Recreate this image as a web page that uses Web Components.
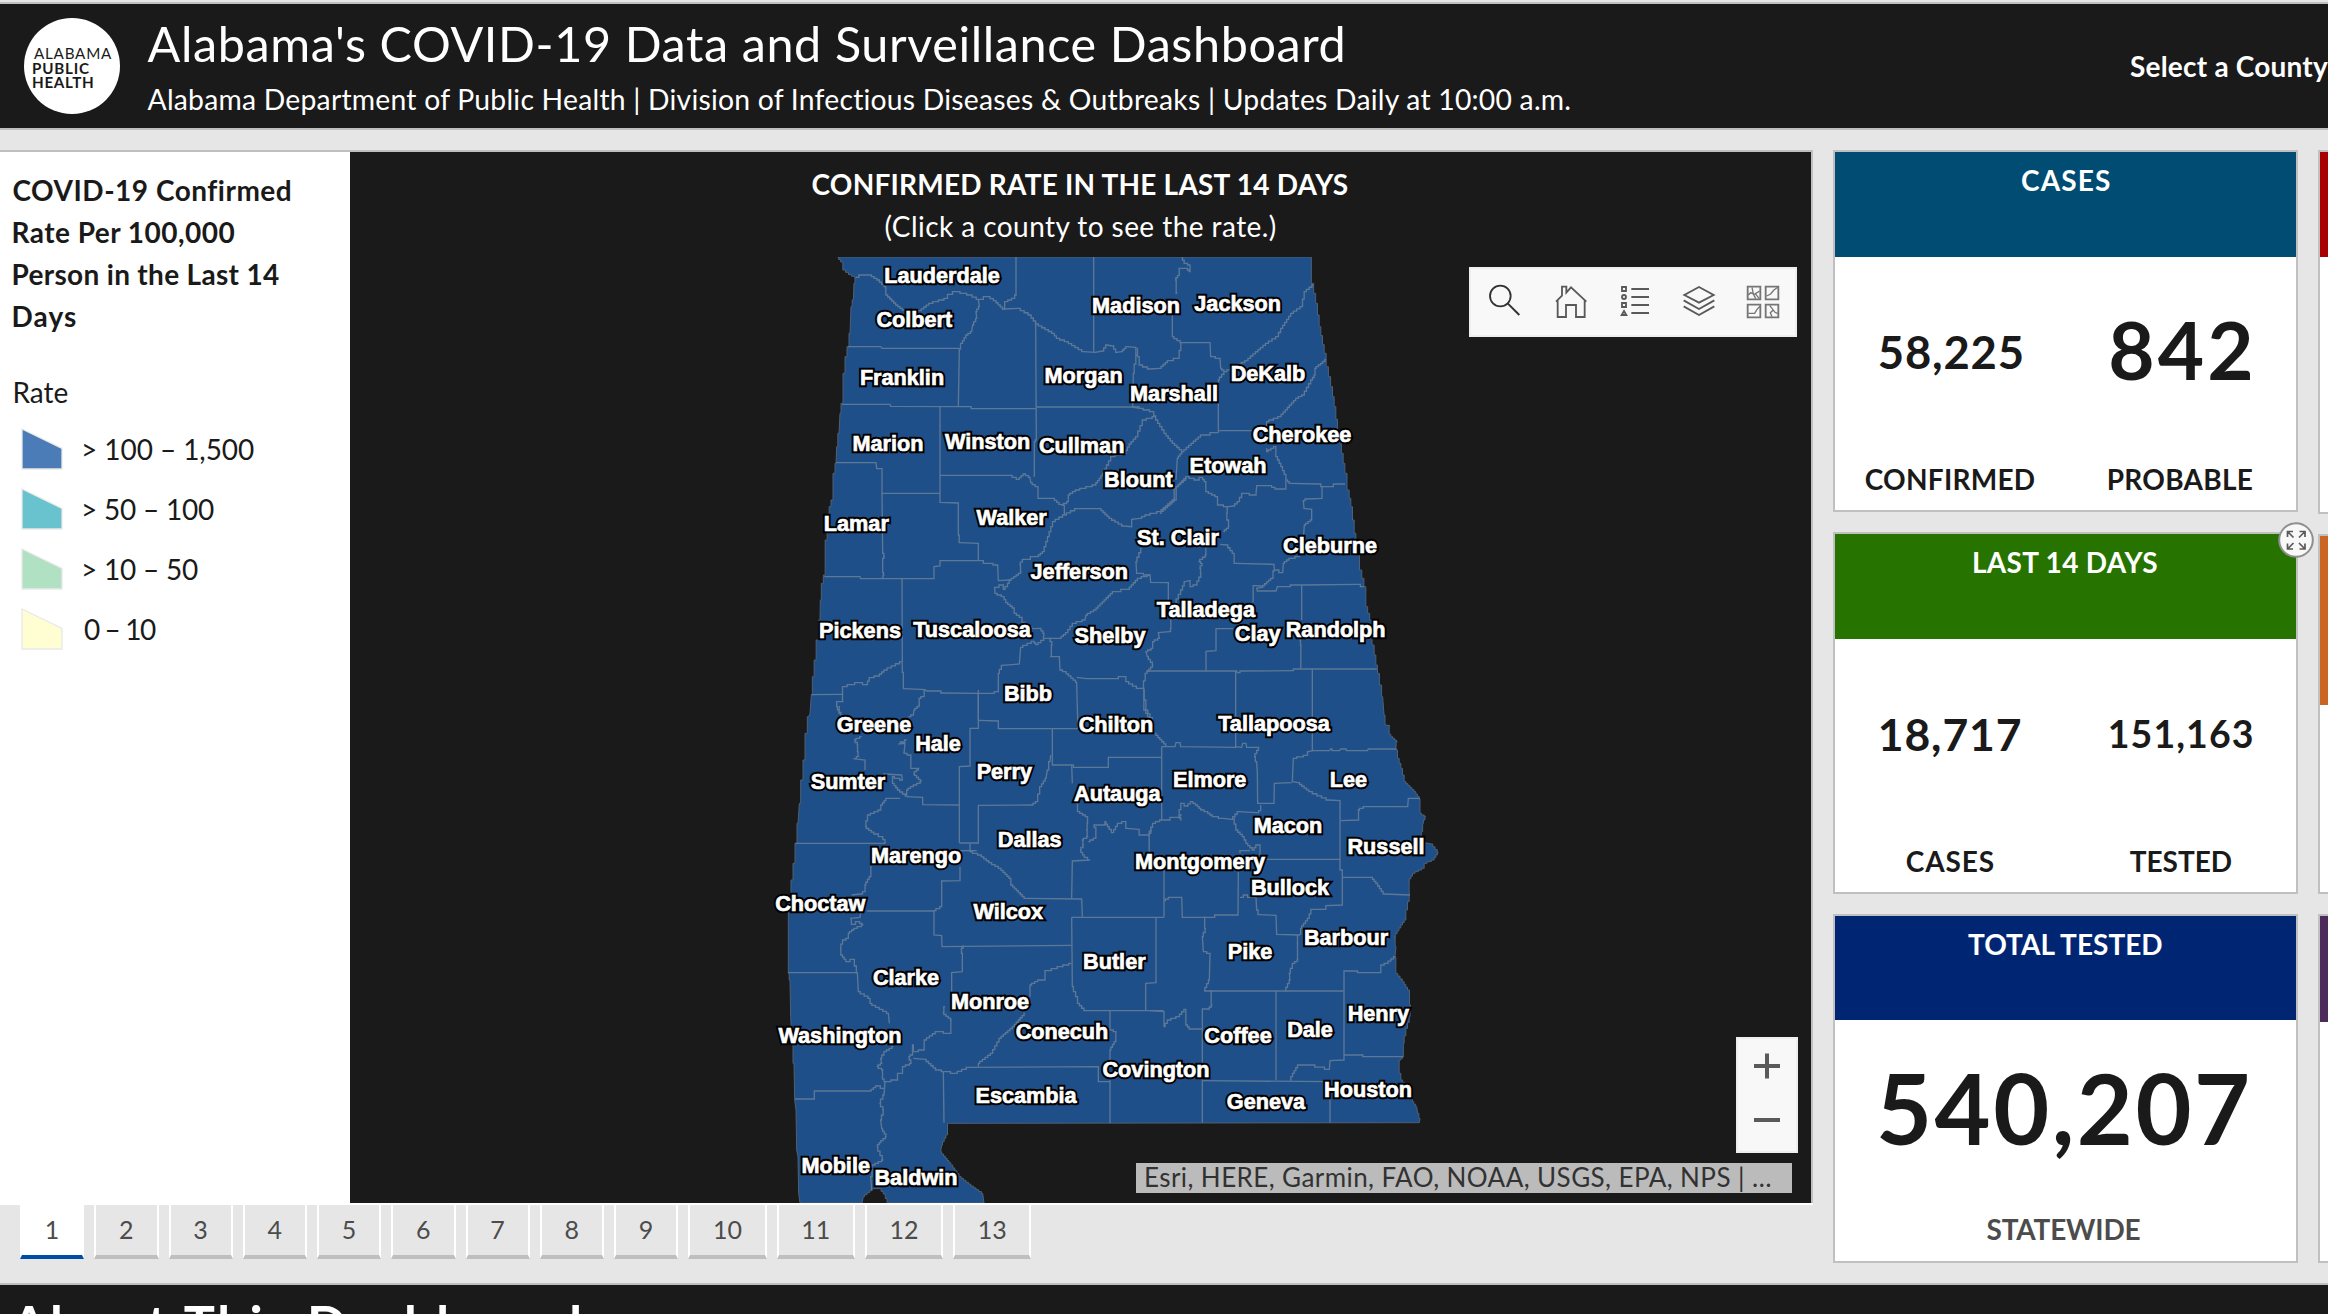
<!DOCTYPE html>
<html lang="en">
<head>
<meta charset="utf-8">
<title>Alabama's COVID-19 Data and Surveillance Dashboard</title>
<style>
html,body{margin:0;padding:0}
body{width:2328px;height:1314px;overflow:hidden;background:#e6e6e6;font-family:Lato,"Open Sans",sans-serif;font-size:28px;color:#1a1a1a}
</style>
</head>
<body>
<covid-dashboard></covid-dashboard>
<script>
const make = (name, html, setup) => customElements.define(name, class extends HTMLElement {
  connectedCallback() {
    if (this.shadowRoot) return;
    this.attachShadow({mode: 'open'}).innerHTML = typeof html === 'function' ? html(this) : html;
    if (setup) setup(this);
  }
});

/* One line of text whose drawn width is set by the w attribute. */
const ctx = document.createElement('canvas').getContext('2d');
make('fit-text', `<style>:host{display:block;white-space:nowrap}span{display:inline-block}</style><span><slot></slot></span>`, el => {
  const w = +el.getAttribute('w'), t = el.textContent, cs = getComputedStyle(el);
  ctx.font = `${cs.fontWeight} ${cs.fontSize} ${cs.fontFamily}`;
  const m = ctx.measureText(t);
  el.style.width = w + 'px';
  el.style.letterSpacing = ((w - m.actualBoundingBoxRight - m.actualBoundingBoxLeft) / (t.length - 1)) + 'px';
  el.shadowRoot.querySelector('span').style.marginLeft = m.actualBoundingBoxLeft + 'px';
});

make('health-logo', `<style>
:host{display:block;width:96px;height:96px;border-radius:50%;background:#fff;color:#1a1a1a;box-sizing:border-box;padding:28px 0 0 9px;font-size:15.2px;line-height:14.5px;font-weight:700}
.l{font-weight:400;margin-left:1px}</style>
<fit-text class="l" w="78">ALABAMA</fit-text><fit-text w="56">PUBLIC</fit-text><fit-text w="60">HEALTH</fit-text>`);

make('top-bar', `<style>
:host{display:flex;height:124px;margin-top:2px;border-top:2px solid #bfbfbf;border-bottom:2px solid #bfbfbf;background:#1a1a1a;color:#fff;overflow:hidden}
health-logo{margin:14px 28px 0 24px}
.t{width:1960px;margin-right:32px;padding-top:10px}
.a{font-size:48.5px;line-height:58px}.b{font-size:28.3px;line-height:34px;margin-top:10px}
.c{font-weight:700;line-height:34px;margin-top:45px;flex:none}</style>
<health-logo></health-logo>
<div class="t"><fit-text class="a" w="1195">Alabama's COVID-19 Data and Surveillance Dashboard</fit-text>
<fit-text class="b" w="1425">Alabama Department of Public Health | Division of Infectious Diseases &amp; Outbreaks | Updates Daily at 10:00 a.m.</fit-text></div>
<fit-text class="c" w="198">Select a County</fit-text>`);

make('legend-row', el => `<style>
:host{display:flex;align-items:center;height:60px;padding-left:21px;gap:21px}
svg{display:block;width:42px;height:42px}</style>
<svg viewBox="0 0 42 42"><path d="M1 1L41 20.500V41H1Z" fill="${el.getAttribute('color')}" stroke="#e9e9e9" stroke-width="1.300"/></svg><slot></slot>`);

make('map-legend', `<style>
:host{display:block;width:350px;flex:none;background:#fff;padding-top:17px;box-sizing:border-box}
.h{font-weight:700;line-height:42px;padding-left:13.500px}.r{line-height:42px;margin:34px 0 6px 14.500px}</style>
<div class="h"><fit-text w="277">COVID-19 Confirmed</fit-text><fit-text w="221.500">Rate Per 100,000</fit-text><fit-text w="265.500">Person in the Last 14</fit-text><fit-text w="62.500">Days</fit-text></div>
<fit-text class="r" w="53">Rate</fit-text>
<legend-row color="#4c7cb8"><fit-text w="170">&gt; 100 – 1,500</fit-text></legend-row>
<legend-row color="#68c3ce"><fit-text w="130">&gt; 50 – 100</fit-text></legend-row>
<legend-row color="#b1e1c3"><fit-text w="114">&gt; 10 – 50</fit-text></legend-row>
<legend-row color="#fefed2"><fit-text w="72">0 – 10</fit-text></legend-row>`);

/* County geometry, in thirds of a pixel; each tile has its own origin. */
const outline = `203,51 215,66 222,90 240,104 258,113 252,130 250,180 243,200 240,280 234,320 228,350 222,400 216,490 210,520 207,580 200,620 198,670 192,700 186,780 180,800 175,850 168,900 163,1005 157,1030 151,1080 150,1140 142,1200 135,1260 130,1310 124,1365 120,1420 116,1430 108,1480 102,1560 96,1620 88,1690 84,1750 78,1810 72,1870 66,1920 60,1970 55,2010 55,2200 60,2220 62,2330 66,2410 72,2470 74,2580 78,2610 80,2730 84,2750 86,2860 90,2889 276,2889 280,2870 295,2858 310,2846 330,2846 343,2862 354,2889 642,2889 638,2860 606,2838 570,2810 545,2775 512,2735 515,2715 530,2685 535,2650 1948,2648 1950,2635 1943,2620 1940,2600 1928,2585 1925,2560 1895,2520 1890,2500 1885,2465 1900,2450 1900,2410 1910,2365 1920,2330 1922,2295 1915,2250 1900,2225 1880,2200 1875,2150 1878,2120 1873,2090 1895,2055 1905,2040 1910,2010 1920,1960 1915,1925 1930,1900 1960,1885 1965,1870 1990,1860 2005,1837 1985,1812 1965,1808 1950,1790 1958,1775 1958,1750 1967,1730 1950,1720 1950,1677 1935,1655 1905,1625 1895,1585 1885,1555 1880,1530 1875,1520 1882,1505 1865,1490 1855,1475 1860,1457 1848,1455 1842,1425 1838,1370 1825,1300 1820,1275 1810,1215 1802,1140 1790,1100 1785,1040 1772,990 1765,930 1755,880 1745,800 1735,750 1727,700 1717,640 1705,575 1695,500 1685,440 1672,380 1665,340 1650,260 1640,190 1628,130 1620,51`;
const tiles = [
[0, 0, `738,51 738,165 730,175 708,185 700,207|258,112 275,105 300,105 325,120 345,140 350,165 380,195 400,210 450,212 480,190 530,175 535,163 560,155 600,165 625,178 655,170 675,182 700,207 745,205 780,225 800,252 850,280 862,295 890,305 940,335 975,337 998,333 1010,315 1028,318 1040,337 1055,335 1070,320 1095,322 1100,345|971,51 971,337|625,178 628,200 618,215 620,235 608,255 605,275 590,285 575,310 568,327 565,498|234,320 332,320 336,325 568,325|216,493 360,493 362,499 600,500 607,506 798,506|797,252 799,600 793,605 793,710|800,501 1110,501|510,500 510,787 565,789 565,885 570,908 625,910 625,962|198,668 318,668 320,686 336,686 336,760 510,760|336,760 338,940 345,950 338,955 338,998 343,1006 335,1014|510,706 720,706 745,718 762,702 780,712 782,728 800,740 808,775 850,775 870,793 883,796 883,825|163,1010 270,1010 272,1016 492,1016 492,980 510,978 510,962 625,962 655,970 683,975 685,1022 720,1020|883,825 850,845 835,890 820,935 802,950 760,958 748,975 755,995 735,1010 720,1020 710,1040 700,1048 700,1035 674,1042 675,1060 700,1070 710,1088 730,1104 735,1120 752,1132 760,1147 790,1166 810,1165 822,1180 820,1195|396,1016 397,1297 403,1346 465,1349 470,1353 510,1353 515,1359 625,1360 660,1360 685,1355 685,1300 697,1276 748,1272 752,1222 790,1204 800,1214 825,1195 870,1195 890,1178 910,1150 945,1140 948,1125 975,1110 1030,1055 1075,1048 1105,1015 1140,1005|838,1195 848,1215 840,1250 868,1250 870,1290 885,1295 920,1327 923,1440|920,1312 950,1316 1025,1316 1065,1310 1070,1325 1105,1345 1120,1345|883,825 920,806 990,806 1020,835 1060,858 1085,860 1085,838 1110,835 1130,825 1170,815 1210,780 1215,745 1250,715|875,796 895,785 895,765 920,750 975,735 990,715 1000,700 1025,650 1065,640 1080,612 1100,590 1120,540 1155,530|1100,345 1090,400 1088,501|124,1364 215,1363 220,1340 265,1328 290,1334 300,1313 325,1308 345,1290 395,1265|215,1363 220,1385 200,1385 200,1400 210,1420|465,1350 460,1370 445,1375 450,1395 432,1410 430,1425 415,1430|625,1360 625,1440`,
 `Lauderdale,516,128|Colbert,433,261|Franklin,396,434|Marion,354,632|Winston,653,626|Cullman,935,638|Blount,1105,740|Walker,725,854|Lamar,259,873|Jefferson,928,1016|Morgan,941,428|Madison,1098,218|Pickens,270,1195|Tuscaloosa,606,1190|Shelby,1020,1208|Bibb,774,1382`],
[960, 0, `275,51 285,70 300,75 300,95 290,85 265,85 270,100 255,120 262,160|247,225 247,290 275,308 360,308 362,350 390,355 392,385 405,395 385,420 385,578|140,325 150,375 180,387 210,385 235,362 265,355 275,308|670,135 645,155 635,200 605,220 575,265 562,290 530,310 485,348 470,362 405,395|708,358 695,370 675,385 675,405 665,420 640,465 620,475 570,530 530,545 530,570|385,572 530,572|385,578 335,585 278,635 262,655 258,720|125,501 150,505 188,515 200,540 225,580 250,610 278,635|530,625 530,635 555,620 560,650 575,680 590,715 585,747 560,747 540,737 500,737 498,765 458,760 445,785 430,798 415,800 385,795 380,770 350,755 345,725 335,712 320,720 290,710 262,740 255,780 210,820|590,720 600,730 690,732 695,740 765,732|696,740 696,775 650,777 640,782 642,805 665,808 665,840 643,855 640,900|630,950 600,955 580,970 578,998 555,990|415,800 408,820 418,860 400,875|155,925 138,965 140,1000 180,1005 182,1027 235,1028 235,1085|345,925 350,945 325,965 338,970 328,985 335,1000 318,1035 300,1040 300,1022 285,1025 275,1050 255,1090|240,1140 245,1165 238,1175 205,1178 208,1195 188,1205 188,1225 168,1235 172,1250 190,1275 168,1300 158,1345|390,913 410,915 430,940 435,970 552,973 553,993 545,1015 515,1042 500,1045 502,1053 558,1053 562,1040 640,1035 800,1033 822,1040|487,1085 492,1037 515,1038|635,1035 635,1140|628,1200 635,1215 630,1285|430,1166 378,1166 378,1232 348,1234 348,1292|170,1293 440,1293 442,1298 458,1293 605,1292 615,1287 860,1287|437,1293 437,1440|667,1287 667,1440|158,1345 165,1410 180,1440`,
 `Jackson,443,212|DeKalb,534,422|Marshall,252,482|Cherokee,636,607|Etowah,414,698|St. Clair,264,914|Cleburne,720,938|Talladega,348,1130|Clay,503,1202|Randolph,737,1190`],
[0, 1350, `210,50 205,60 215,75|275,140 252,150 265,165 260,185 268,200 250,206 285,210 285,240|340,252 395,255 397,270 365,260 370,280 385,300 410,318|410,150 385,162 405,160 402,190 420,195 425,235 448,235 430,250 455,275 425,290 410,300 410,318|390,325 350,325 335,345 330,360 295,375 285,410 315,432 335,440 348,458|410,320 458,322 458,344 568,345|568,458 568,230 600,228 600,115 625,115 625,0|625,91 685,93 685,116 923,116|923,80 923,116|847,116 847,225 905,225 915,232 1015,232 1015,202 1175,202|842,195 840,215 832,240 828,265 812,290 800,335 785,345 625,346 625,459 568,459|76,460 345,460|600,460 600,485 630,495 660,518 690,535 720,565 725,585 765,625 935,627 937,680|570,482 620,482|570,530 570,572 515,573 515,650 492,662 492,735 515,737 516,770 905,766|305,530 300,560 285,585 285,605 270,612 245,615|290,663 492,663|272,665 270,682 240,685 248,703 265,695 280,705 255,715 235,730 235,745 220,750 210,775 215,795 230,815 250,808 262,848|55,848 262,848 265,905 300,925 300,940 355,970 358,1000|370,1070 345,1085 332,1105 335,1120 320,1130 340,1140 335,1160 345,1175 342,1215 328,1240 342,1260 332,1290 335,1315 350,1340 335,1352 320,1370 340,1410 310,1425 302,1460 305,1500|905,225 907,280|920,340 925,365 950,380 955,400 948,420 955,440 935,450 942,465 930,480 945,502 960,510 907,513 905,625|955,455 975,445 980,420 970,405 1005,405 1005,395 1020,418 1028,428 1045,400 1065,395 1070,415 1105,418 1110,435 1135,435 1150,400 1175,390 1225,382 1235,375|1175,170 1175,390|1120,0 1130,60 1150,95|1155,130 1190,168|582,768 572,780 577,790 577,845 545,848 545,905|525,950 518,968 545,990 540,1030 500,1025 465,1050 460,1080 430,1085 430,1065 425,1095 415,1100 425,1120 400,1130 395,1150 385,1150 380,1170 345,1175|430,1105 465,1108 500,1140 555,1150 595,1132 985,1130 985,1175 1020,1175|905,820 870,830 835,842 825,842 825,870 808,870 780,885 780,920|765,970 730,1010 690,1045 665,1090 625,1120 625,1130|905,682 907,890 920,920 925,940 945,962 1180,962|905,682 1183,682|1158,682 1158,878 1127,880 1127,962|1020,962 1020,1020 1040,1025 1035,1055 1020,1080 1020,1110|1020,1170 1020,1300|75,1227 133,1227 133,1203 300,1203 320,1188 342,1195|520,1145 522,1298`,
 `Greene,312,127|Hale,504,182|Sumter,234,297|Perry,703,267|Autauga,1042,332|Chilton,1038,127|Dallas,779,470|Marengo,438,520|Choctaw,151,662|Wilcox,715,686|Butler,1033,836|Clarke,408,884|Monroe,660,956|Washington,210,1058|Conecuh,876,1046|Escambia,768,1238|Mobile,197,1448|Baldwin,438,1484`],
[960, 1350, `215,170 255,170 258,158 270,158 272,170 440,172|437,80 437,170 455,172 458,160 468,160 470,172 508,172 492,200 500,215 502,250 503,340 552,340 553,280 605,278|667,80 667,182 655,185 650,196 610,205 607,275 625,278 660,305 715,330 750,332 750,540 757,540 757,645 710,647 705,658 665,658 655,685 632,715 632,735|667,182 718,182 722,177 730,182 748,182 752,177 768,177 770,182 832,182 835,177 920,177|752,392 808,390 803,360 825,350 953,350 955,325 990,325|275,390 265,378 275,340 290,348 305,335 320,345 335,360 350,365 370,380 400,385 425,388 445,365 500,368 512,362 512,345|430,385 440,420 460,440 470,460 490,480 500,465 510,465 510,505|450,490 450,482 480,482|530,508 750,508|185,420 175,440 180,490|757,562 845,562 860,580 882,612 960,615|222,540 222,680|222,632 240,622 275,622 277,682 370,682 378,675 444,675 445,545|450,622 470,615 475,622 498,622 500,660 508,674 558,676 560,733 630,735|340,682 348,715 337,740 340,785 360,790 358,870 342,903 760,903|625,738 620,760 625,810 610,820 598,850 600,870 585,903|360,903 367,945 355,957 337,957 337,1298|558,903 558,1170|762,903 762,843 795,843 810,848 870,848 875,825 890,820 915,800|762,903 762,1110 720,1112 718,1138 660,1125 625,1125 610,1150 600,1170|337,1172 720,1175|720,1220 720,1298|762,1095 815,1095 822,1100 940,1100|180,962 222,965 222,1010 235,990 265,980 285,958 290,1005 300,1017 337,1017`,
 `Tallapoosa,552,122|Elmore,359,290|Lee,775,290|Macon,594,428|Russell,888,492|Montgomery,330,536|Bullock,600,614|Barbour,768,764|Pike,480,806|Henry,865,992|Dale,660,1040|Coffee,444,1058|Covington,198,1160|Geneva,528,1256|Houston,834,1220`]];
/* Breaks a line into short right-angled steps, as a low-resolution boundary is drawn. */
const stepped = s => {
  const p = s.split(' ').map(q => q.split(',').map(Number));
  let d = `M${p[0]}`;
  for (let i = 1; i < p.length; i++) {
    const [x0, y0] = p[i - 1], [x1, y1] = p[i], dx = x1 - x0, dy = y1 - y0;
    const n = Math.min(Math.abs(dx), Math.abs(dy)) < 5 ? 0 : Math.max(1, Math.round(Math.min(Math.abs(dx), Math.abs(dy)) / 6));
    for (let k = 1; k <= n; k++) {
      const x = x0 + dx * (k - .5) / n, y = y0 + dy * k / n;
      d += `H${x.toFixed(1)}V${y.toFixed(1)}`;
    }
    d += `L${x1},${y1}`;
  }
  return d;
};
make('county-map', () => `<style>:host{display:block}svg{display:block;width:1461px;height:946px}
.l{fill:none;stroke:#5d7897;stroke-width:4}
text{font:bold 65px "Liberation Sans",Arial,sans-serif;text-anchor:middle;stroke-linejoin:miter;stroke-miterlimit:3}
.halo{fill:#000;stroke:#000;stroke-width:14}.face{fill:#fff;stroke:#fff;stroke-width:2}</style>
<svg viewBox="-1260 51 4383 2838"><defs></defs><path d="${stepped(outline)}Z" fill="#1f4f89" stroke="#4d6075" stroke-width="3"/>
${tiles.map(([x, y, lines]) => `<g class="l" transform="translate(${x} ${y})">${lines.split('|').map(s => `<path d="${stepped(s)}"/>`).join('')}</g>`).join('')}
${tiles.map(([x, y, , names]) => `<g transform="translate(${x} ${y})">${names.split('|').map((s, i) => { const [t, a, b] = s.split(','), id = `n${x}-${y}-${i}`; return `<use href="#${id}" class="halo"/><text id="${id}" x="${a}" y="${b}">${t}</text><use href="#${id}" class="face"/>`; }).join('')}</g>`).join('')}</svg>`);

make('map-toolbar', `<style>
:host{display:block;box-sizing:border-box;width:328px;height:70px;background:#f8f8f8;border:2px solid #eee}
svg{display:block;width:324px;height:66px;fill:none;stroke:#595959;stroke-width:5.500}</style>
<svg viewBox="33 57 972 198">
<g stroke="#323232"><circle cx="121" cy="138" r="31"/><path d="M143 160L178 195" stroke-width="6"/></g>
<path d="M288 155L306 137V110H319V128L333 112L379 155M293 151V201H318V165H348V201H374V151" />
<path d="M514 117H567M514 141H567M514 165H567M514 189H567"/><path d="M486 111H498V123H486ZM486 159H498V171H486ZM492 183L499 195H485Z"/><circle cx="492" cy="141" r="6"/>
<path d="M717 111L761 135L717 158L673 135ZM671 151L717 177L763 151M671 169L717 195L763 169"/>
<g stroke="#757575"><path d="M863 110H901V148H863ZM917 110H955V148H917ZM863 164H901V202H863ZM917 164H955V202H917Z"/><path d="M865 135L872 128L880 132L876 112M880 132L887 146M883 133L899 123M885 130L898 146M920 138L932 132L941 121L953 112M865 190H884L891 178L900 169M929 166L945 187L954 191M940 180L931 188L936 200" stroke-width="4"/></g></svg>`);

make('zoom-control', `<style>
:host{display:block;box-sizing:border-box;width:62px;height:116px;background:#f8f8f8;border:2px solid #eee}
svg{display:block;width:58px;height:112px}</style>
<svg viewBox="0 0 58 112"><path d="M16 27H42M29 14.500V39.500M16 81H42" stroke="#5a5a5a" stroke-width="4" fill="none"/></svg>`);

make('map-panel', `<style>
:host{display:block;position:relative;width:1461px;height:1051px;background:#1a1a1a;color:#fff;overflow:hidden}
.head{height:105px;box-sizing:border-box;padding:11px 0 0 1px;line-height:42px;display:flex;flex-direction:column;align-items:center}
.head b{font-weight:700}
map-toolbar{position:absolute;right:14px;top:115px}zoom-control{position:absolute;right:13px;top:885px}
.attr{position:absolute;right:19px;bottom:10px;width:656px;height:30px;box-sizing:border-box;padding-left:10px;background:#bbb;color:#323232;font-size:26px;line-height:28px}</style>
<div class="head"><b><fit-text w="537">CONFIRMED RATE IN THE LAST 14 DAYS</fit-text></b><fit-text w="391">(Click a county to see the rate.)</fit-text></div>
<county-map></county-map><map-toolbar></map-toolbar><zoom-control></zoom-control>
<div class="attr"><fit-text w="625">Esri, HERE, Garmin, FAO, NOAA, USGS, EPA, NPS | …</fit-text></div>`);

make('page-tabs', () => `<style>
:host{display:flex;gap:10px;padding-left:20px;height:54px}
div{box-sizing:border-box;width:64.250px;height:54px;border:solid #fff;border-width:0 2px 4px;border-bottom-color:#bfbfbf;font-size:25px;line-height:49px;text-align:center;color:#4c4c4c}
.w{width:78.300px}.on{background:#fff;border-bottom-color:#004da8}</style>
${[...Array(13)].map((_, i) => `<div class="${i > 8 ? 'w' : ''}${i ? '' : 'on'}">${i + 1}</div>`).join('')}`);

make('stat-value', el => `<style>
:host{display:flex;flex-direction:column;align-items:center;flex:1;font-weight:700}
.v{font-size:${el.getAttribute('size')}px;height:var(--vh,188px);line-height:calc(var(--vh,188px) + ${el.getAttribute('dy') || 2}px)}.l{line-height:42px;margin-top:var(--gap,13px);color:var(--lc,#1a1a1a)}</style>
<fit-text class="v" w="${el.getAttribute('vw')}">${el.getAttribute('value')}</fit-text><fit-text class="l" w="${el.getAttribute('lw')}">${el.getAttribute('label')}</fit-text>`);

make('stat-card', el => `<style>
:host{display:block;position:relative;box-sizing:border-box;width:465px;height:${el.getAttribute('h')}px;border:2px solid #c0c0c0;background:#fff}
.t{height:${el.getAttribute('hh')}px;background:${el.getAttribute('color')};color:#fff;font-weight:700;line-height:42px;box-sizing:border-box;padding:7px 0 0 1px;display:flex;justify-content:center}
.b{display:flex}</style><div class="t"><slot name="title"></slot></div><div class="b"><slot></slot></div><slot name="badge"></slot>`);

make('expand-button', `<style>
:host{position:absolute;right:-18px;top:-12px;display:block;width:36px;height:36px}svg{display:block}</style>
<svg width="36" height="36" viewBox="0 0 36 36"><circle cx="18" cy="18" r="16.800" fill="#f8f8f8" stroke="#8f8f8f" stroke-width="2"/><g fill="none" stroke="#595959" stroke-width="1.700"><path d="M9.500 15V9.500H15M9.500 9.500L15.500 15.500M21.500 9.500H27V15M27 9.500L21 15.500M9.500 21.500V27H15M9.500 27L15.500 21M21.500 27H27V21.500M27 27L21 21"/></g></svg>`);

make('covid-dashboard', `<style>
:host{display:flex;flex-direction:column;width:2328px;height:1314px;overflow:hidden}
main{display:flex;gap:20px;height:1133px;padding-top:20px;box-sizing:content-box;overflow:hidden}
.left{width:1813px;flex:none}
.row{display:flex;border-top:2px solid #bfbfbf;border-right:2px solid #bfbfbf}
.rule{height:2px;background:#fff}
.cards{display:flex;flex-direction:column;gap:20px;flex:none;width:465px}
footer{border-top:2px solid #bfbfbf;background:#1a1a1a;color:#fff;height:31px;flex:none;padding:8px 0 0 10px;box-sizing:border-box;font-size:52px;line-height:60px;font-weight:700;overflow:hidden}
.wide{--vh:172px;--gap:16px;--lc:#4c4c4c;margin-left:-3px;margin-right:1px}</style>
<top-bar></top-bar>
<main>
<div class="left"><div class="row"><map-legend></map-legend><map-panel></map-panel></div><div class="rule"></div><page-tabs></page-tabs></div>
<div class="cards">
<stat-card h="362" hh="105" color="#004c73"><fit-text slot="title" w="88">CASES</fit-text><stat-value value="58,225" size="45.4" vw="143" label="CONFIRMED" lw="169"></stat-value><stat-value value="842" size="80" vw="139" dy="-3" label="PROBABLE" lw="144"></stat-value></stat-card>
<stat-card h="362" hh="105" color="#267300"><fit-text slot="title" w="184">LAST 14 DAYS</fit-text><stat-value value="18,717" size="44.5" vw="141" label="CASES" lw="87"></stat-value><stat-value value="151,163" size="37.5" vw="142" label="TESTED" lw="102"></stat-value><expand-button slot="badge"></expand-button></stat-card>
<stat-card h="349" hh="104" color="#002673"><fit-text slot="title" w="196">TOTAL TESTED</fit-text><stat-value class="wide" value="540,207" size="96.7" vw="367" dy="5" label="STATEWIDE" lw="154"></stat-value></stat-card>
</div>
<div class="cards">
<stat-card h="364" hh="105" color="#a80000"></stat-card>
<stat-card h="360" hh="169" color="#ca6621"></stat-card>
<stat-card h="349" hh="106" color="#4c2a5c"></stat-card>
</div>
</main>
<footer><fit-text w="571">About This Dashboard</fit-text></footer>`);
</script>
</body>
</html>
